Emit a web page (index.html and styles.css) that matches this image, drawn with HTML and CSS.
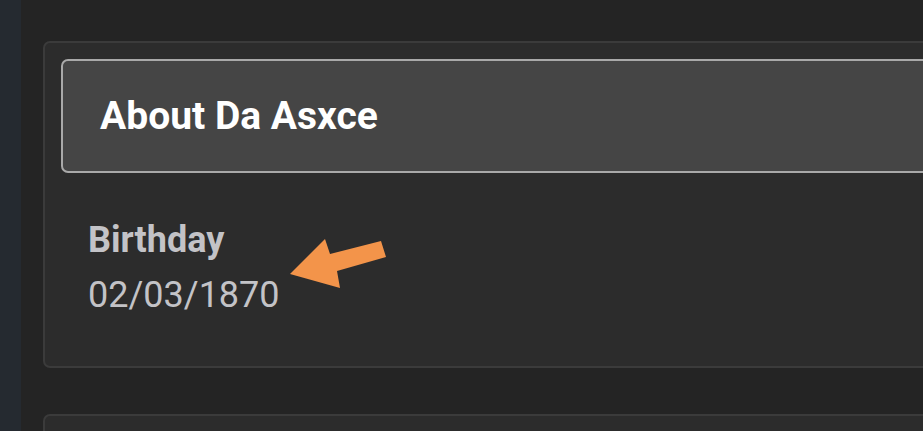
FILE: index.html
```html
<!DOCTYPE html>
<html lang="en">
<head>
    <meta charset="UTF-8">
    <meta name="viewport" content="width=device-width, initial-scale=1.0">
    <title>About Da Asxce</title>
    <link rel="stylesheet" href="styles.css">
</head>
<body>

    <div class="layout">
        <div class="side-strip"></div>

        <main class="content">
            <section class="card">
                <div class="card-header">
                    <h2>About Da Asxce</h2>
                </div>
                <div class="card-body">
                    <div class="field-label">Birthday</div>
                    <div class="field-value">02/03/1870</div>
                </div>

                <!-- pointer arrow -->
                <svg class="pointer" width="100" height="52" viewBox="0 0 100 52">
                    <polygon points="0,35 35,0 40,15 91,2 96,18 47,32 50,49" fill="#f3944a"/>
                </svg>
            </section>

            <section class="card">
                <div class="card-header">
                    <h2>&nbsp;</h2>
                </div>
            </section>
        </main>
    </div>

</body>
</html>
```

FILE: styles.css
```css
body {
    font-family: Roboto, "Liberation Sans", sans-serif;
    background-color: #242424;
    margin: 0;
    overflow: hidden;
    height: 431px;
}

.layout {
    display: flex;
    height: 100%;
}

.side-strip {
    width: 21px;
    flex-shrink: 0;
    background-color: #252a30;
}

.content {
    flex: 1;
    padding: 41px 0 0 22px;
    display: flex;
    flex-direction: column;
    gap: 46px;
    margin-right: -60px;
}

.card {
    position: relative;
    background-color: #2c2c2c;
    border: 2px solid #3b3b3b;
    border-radius: 7px;
    padding: 16px 16px 43px 16px;
}

.card-header {
    background-color: #454545;
    border: 2px solid #a9a9a9;
    border-radius: 7px;
    height: 110px;
    display: flex;
    align-items: center;
    padding-left: 37px;
}

.card-header h2 {
    margin: 0;
    color: #fff;
    font-size: 39px;
    font-weight: 700;
}

.card-body {
    padding: 40px 0 0 27px;
}

.field-label,
.field-value {
    font-size: 36px;
    line-height: 55px;
    color: #c3c3c7;
}

.field-label {
    font-weight: 700;
}

.pointer {
    position: absolute;
    left: 245px;
    top: 196px;
}
```
